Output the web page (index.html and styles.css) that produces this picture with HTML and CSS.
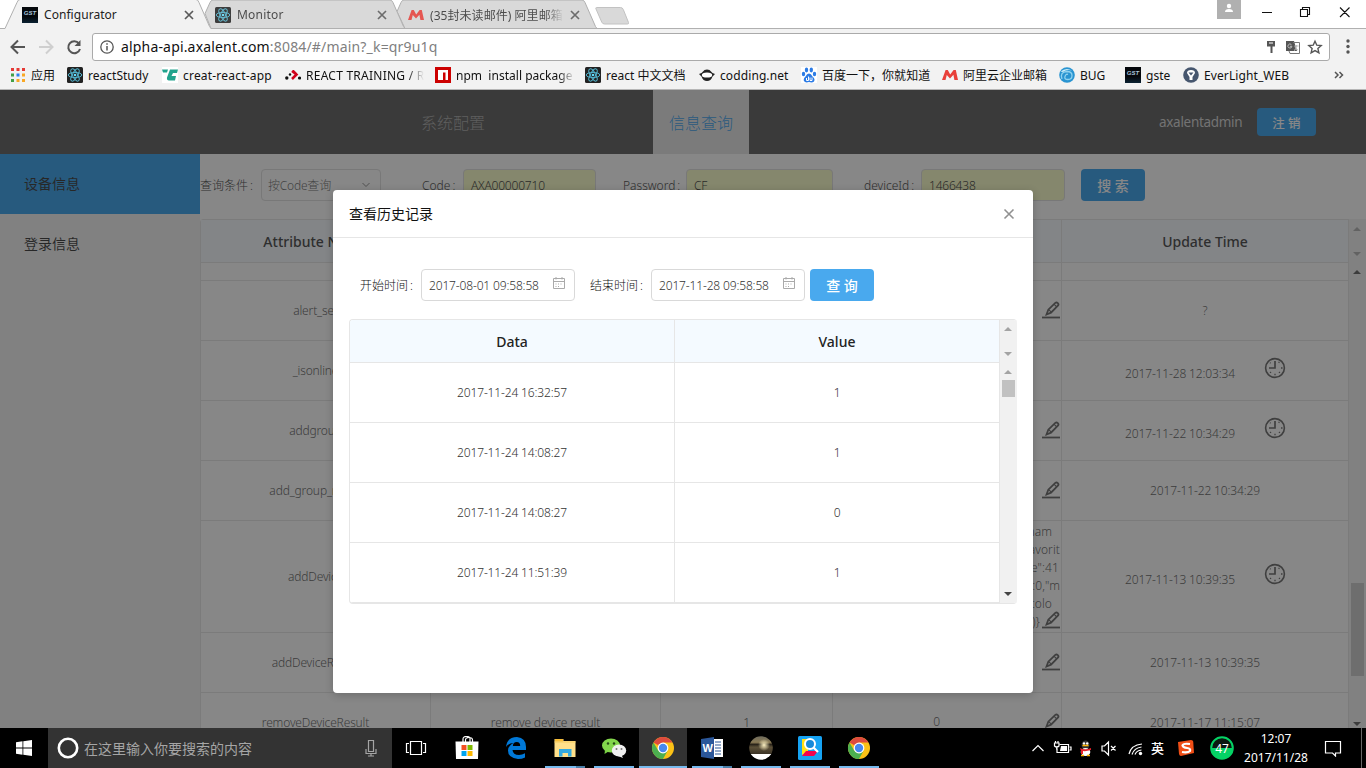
FILE: index.html
```html
<!DOCTYPE html>
<html lang="zh-CN">
<head>
<meta charset="utf-8">
<title>Configurator</title>
<link rel="stylesheet" href="styles.css">
</head>
<body>
<svg class="defs" width="0" height="0">
  <symbol id="react" viewBox="0 0 16 16"><rect width="16" height="16" rx="1.5" fill="#222"/><g fill="none" stroke="#53b5cf" stroke-width="1"><ellipse cx="8" cy="8" rx="6.8" ry="2.6"/><ellipse cx="8" cy="8" rx="6.8" ry="2.6" transform="rotate(60 8 8)"/><ellipse cx="8" cy="8" rx="6.8" ry="2.6" transform="rotate(120 8 8)"/></g><circle cx="8" cy="8" r="1.3" fill="#61dafb"/></symbol>
  <symbol id="mail" viewBox="0 0 16 16"><path d="M0 13L3.6 3h2.200l2.400 4.600L11.600 3h2.200L16 13h-3.600l-1-5.200L8 11.600 4.800 8 3.500 13z" fill="#e8403a"/></symbol>
  <symbol id="x" viewBox="0 0 10 10"><path d="M1 1l8 8M9 1L1 9" stroke="#5a5a5a" stroke-width="1.700"/></symbol>
  <symbol id="pencil" viewBox="0 0 20 20"><g fill="none" stroke="#4d4d4d"><path d="M5.500 13.500L7.300 8.700l7-6.800q1.200-.9 2.500.2 1.200 1.200.3 2.400L10 11.700z" stroke-width="1.800"/><path d="M8 8.800l2 2M13.200 3.300l2.500 2.500" stroke-width="1.200"/><path d="M1 16.500h18" stroke-width="1.800"/></g></symbol>
  <symbol id="clock" viewBox="0 0 22 22"><g fill="none" stroke="#4d4d4d"><circle cx="11" cy="11" r="9.400" stroke-width="1.600"/><path d="M11 4v7H5" stroke-width="1.700"/><path d="M17 11h1.500M11 16.800v1.500M14.600 5.800l.8-.9M15 15l.9.9M7 15l-.9.900M6.600 6.200l-.6-.6" stroke-width="1.300"/></g></symbol>
  <symbol id="calendar" viewBox="0 0 12 12"><g fill="none" stroke="#aaa"><path d="M.5 1.500h11v10H.5zM.5 4.500h11M3 0v2.500M9 0v2.500"/><path d="M2.500 7h7M2.500 9.500h5" stroke-dasharray="1 1.500"/></g></symbol>
  <symbol id="chrome" viewBox="0 0 24 24"><circle cx="12" cy="12" r="11" fill="#fbc116"/><path d="M12 12L2.500 6.500A11 11 0 0 1 21.500 6.500H12z" fill="#dd4b3e"/><path d="M2.470 6.500A11 11 0 0 0 12 23l4.600-8.300L12 12 7.300 14.800z" fill="#4caf50"/><circle cx="12" cy="12" r="5.400" fill="#fff"/><circle cx="12" cy="12" r="4.200" fill="#4788ef"/></symbol>
  <symbol id="up" viewBox="0 0 8 4"><path d="M0 4L4 0l4 4z" fill="currentColor"/></symbol>
  <symbol id="down" viewBox="0 0 8 4"><path d="M0 0l4 4 4-4z" fill="currentColor"/></symbol>
</svg>

<header class="browser">
  <div class="tabs">
    <svg class="tab-shapes" width="640" height="29" viewBox="0 0 640 29">
      <path d="M405 28.500l-8-17 4-9q1-2.500 3-2.500h178q2 0 3 2.500l10.500 24 1.500 2z" fill="#d9d9d9" stroke="#b0b0b0"/>
      <path d="M211 28.500l-6-15 5-11q1-2.500 3-2.500h177q2 0 3 2.500l10.500 24 1.500 2z" fill="#d9d9d9" stroke="#b0b0b0"/>
      <path d="M0 28.500h5L17 2.500Q18-.500 20-.500h176q2 0 3 3l10.500 24 1.500 2V30H0z" fill="#f2f2f2" stroke="#b0b0b0"/>
      <path d="M596.500 7.500h24q2 0 2.800 2l5.200 13q.5 1.500-1 1.500h-23q-2 0-2.800-2l-5.700-13q-.6-1.500.5-1.500z" fill="#d9d9d9" stroke="#c2c2c2"/>
    </svg>
    <div class="tab t1"><span class="gst">GST</span><span>Configurator</span><svg class="tx" width="10" height="10"><use href="#x"/></svg></div>
    <div class="tab t2"><svg width="16" height="16"><use href="#react"/></svg><span class="wide">Monitor</span><svg class="tx" width="10" height="10"><use href="#x"/></svg></div>
    <div class="tab t3"><svg width="16" height="16"><use href="#mail"/></svg><span class="fade">(35封未读邮件) 阿里邮箱</span><svg class="tx" width="10" height="10"><use href="#x"/></svg></div>
    <svg class="window-controls" width="150" height="28" viewBox="0 0 150 28"><rect x="1" width="24" height="19" fill="#b0b0b0"/><circle cx="13" cy="6" r="2.200" fill="#fff"/><path d="M9 12q0-3 4-3t4 3z" fill="#fff"/><path d="M46 12.500h10M84.500 9.500h7v7h-7zM86.500 9V7.500h7v7H92M124 7.500l9.500 9.500M133.500 7.500L124 17" fill="none" stroke="#111" stroke-width="1.100"/></svg>
  </div>
  <div class="toolbar">
    <svg class="nav-icons" width="92" height="32" viewBox="0 0 92 32"><g fill="none" stroke-width="2"><path d="M25 18H12M18 11.500L11.500 18l6.500 6.500" stroke="#555"/><path d="M39 18h13M46 11.500l6.500 6.500-6.500 6.500" stroke="#cfcfcf"/><path d="M79 14.500A6 6 0 1 0 80 20" stroke="#555"/><path d="M80.500 11v6h-6z" fill="#555"/></g></svg>
    <div class="address">
      <svg width="14" height="14" viewBox="0 0 14 14"><circle cx="7" cy="7" r="6.200" fill="none" stroke="#555" stroke-width="1.300"/><path d="M7 6v4.500M7 3.300v1.500" stroke="#555" stroke-width="1.500"/></svg>
      <span class="url">alpha-api.axalent.com<i>:8084/#/main?_k=qr9u1q</i></span>
      <svg class="address-icons" width="58" height="18" viewBox="0 0 58 18"><path d="M2 3h8v5.500H7.500V15h-2V8.500H2z" fill="#555"/><path d="M4 5h4" stroke="#fff"/><path d="M21 3h8l3 10h-11z" fill="#555"/><path d="M28 4.500h6.500v11H25l-1-2.500" fill="none" stroke="#777"/><path d="M26.500 6.800a2 2 0 1 0 .4 1.500h-2M29.500 8h4M31.500 7c0 3-1 5-2.500 5.500M30 8.500c.5 2 2 3 3 3.500" fill="none" stroke="#bbb"/><path d="M50 3.200l1.800 4 4.400.4-3.300 3 1 4.300-3.900-2.300-3.900 2.300 1-4.300-3.300-3 4.400-.4z" fill="none" stroke="#555" stroke-width="1.400"/></svg>
    </div>
    <svg class="more" width="6" height="16" viewBox="0 0 6 16"><circle cx="3" cy="3" r="1.700" fill="#555"/><circle cx="3" cy="8.500" r="1.700" fill="#555"/><circle cx="3" cy="14" r="1.700" fill="#555"/></svg>
  </div>
  <nav class="bookmarks">
    <a class="w57"><svg width="16" height="16" viewBox="0 0 16 16"><path d="M1 2.500h14" stroke="#e53935" stroke-width="3" stroke-dasharray="3 2.500"/><path d="M1 8h3" stroke="#43a047" stroke-width="3"/><path d="M6.500 8h3" stroke="#2f80ed" stroke-width="3"/><path d="M12 8h3" stroke="#f9a825" stroke-width="3"/><path d="M1 13.500h3" stroke="#43a047" stroke-width="3"/><path d="M6.500 13.500h8.500" stroke="#f9a825" stroke-width="3" stroke-dasharray="3 2.500"/></svg><span>应用</span></a>
    <a class="w95"><svg width="16" height="16"><use href="#react"/></svg><span>reactStudy</span></a>
    <a class="w123"><svg width="16" height="16" viewBox="0 0 16 16"><rect width="16" height="16" fill="#fff"/><path d="M0 2.500h6l-1 3H1zM8 2.500h8l-1 3.500h-4L9.500 9H14l-1 4.500H7q-2.500 0-2-3z" fill="#22a38d"/></svg><span class="loose">creat-react-app</span></a>
    <a class="w150"><svg width="16" height="16" viewBox="0 0 16 16"><g fill="#111"><circle cx="1.800" cy="11" r="1.700"/><circle cx="5" cy="7.500" r="1.200"/><circle cx="14.500" cy="11" r="1.600"/></g><path d="M7 4l4.500 3.500L7 12M11.500 7.500L8 4" fill="none" stroke="#d0021b" stroke-width="2.500"/></svg><span class="fade train">REACT TRAINING / R</span></a>
    <a class="w150"><svg width="16" height="16" viewBox="0 0 16 16"><rect width="16" height="16" fill="#c00"/><path d="M3 3h10v10h-2.500V5.500H8V13H3z" fill="#fff"/></svg><span class="fade npm">npm&nbsp; install package</span></a>
    <a class="w114"><svg width="16" height="16"><use href="#react"/></svg><span>react 中文文档</span></a>
    <a class="w102"><svg width="16" height="16" viewBox="0 0 16 16"><path d="M4 4.500q1-2 4-2t4 2l1.500 1.500L16 7l-2.500 2.500Q12 14 8 14t-5.500-4.500L0 7l2.500-1z" fill="#222"/><ellipse cx="8" cy="8" rx="5.200" ry="2.600" fill="#fff"/></svg><span class="loose">codding.net</span></a>
    <a class="w141"><svg width="16" height="16" viewBox="0 0 16 16"><rect width="16" height="16" fill="#fff"/><g fill="#2c7be5"><ellipse cx="5.500" cy="3" rx="1.700" ry="2.400"/><ellipse cx="10.300" cy="3" rx="1.700" ry="2.400"/><ellipse cx="2.500" cy="7" rx="1.700" ry="2.300"/><ellipse cx="13.500" cy="7" rx="1.700" ry="2.300"/><path d="M8 6.500q2 0 3.500 3 3 2 1.500 5-1.500 1.500-5 .6-4 1-5-1-1-2.600 1.500-4.600Q6 6.500 8 6.500"/></g><path d="M5.500 11v2.500h2v-4M9 10.500v3h2v-3" fill="none" stroke="#fff"/></svg><span>百度一下，你就知道</span></a>
    <a class="w117"><svg width="16" height="16"><use href="#mail"/></svg><span>阿里云企业邮箱</span></a>
    <a class="w66"><svg width="16" height="16" viewBox="0 0 16 16"><circle cx="8" cy="8" r="7.800" fill="#2994d1"/><path d="M1.500 4.500Q7 0 13 3.500 8 2 4 5z" fill="#c9ecf9"/><path d="M3 12Q.5 5 8 4.500q5 0 5 4T9 12.500 6 9.500t3-2" fill="none" stroke="#8fd2ef" stroke-width="1.300"/></svg><span>BUG</span></a>
    <a class="w58"><span class="gst">GST</span><span>gste</span></a>
    <a class="w151"><svg width="16" height="16" viewBox="0 0 16 16"><circle cx="8" cy="8" r="7.800" fill="#46566e"/><path d="M4 6q0-3 4-3t4 3L9.500 10v3h-3v-3z" fill="#fff"/><path d="M5.500 5.500h5L8 8.500z" fill="#46566e"/></svg><span class="loose">EverLight_WEB</span></a>
    <svg width="10" height="8" viewBox="0 0 10 8"><path d="M1 1l3 3-3 3M5.500 1l3 3-3 3" fill="none" stroke="#555" stroke-width="1.500"/></svg>
  </nav>
</header>

<main class="app">
  <div class="topbar">
    <a class="top-link">系统配置</a><a class="top-link active">信息查询</a>
    <span class="user">axalentadmin</span><button class="btn small">注 销</button>
  </div>
  <div class="body">
    <aside class="side"><a class="active">设备信息</a><a>登录信息</a></aside>
    <section class="content">
      <div class="filters">
        <label class="f1">查询条件<s>:</s></label><div class="select">按Code查询<svg width="8" height="6" viewBox="0 0 8 6"><path d="M.5 1L4 4.500 7.500 1" fill="none" stroke="#777"/></svg></div>
        <label class="f2">Code<s>:</s></label><div class="input i2">AXA00000710</div>
        <label class="f3">Password<s>:</s></label><div class="input i3">CF</div>
        <label class="f4">deviceId<s>:</s></label><div class="input i4">1466438</div>
        <button class="btn">搜 索</button>
      </div>
      <div class="grid-wrap">
        <div class="grid">
          <div class="row head"><div>Attribute Name</div><div></div><div></div><div></div><div>Update Time</div></div>
          <div class="row stub"><div></div><div></div><div></div><div></div><div></div></div>
          <div class="row"><div>alert_set</div><div></div><div></div><div class="edit"><svg><use href="#pencil"/></svg></div><div>?</div></div>
          <div class="row"><div>_isonline</div><div></div><div></div><div></div><div class="hist"><span>2017-11-28 12:03:34</span><svg><use href="#clock"/></svg></div></div>
          <div class="row"><div>addgroup</div><div></div><div></div><div class="edit"><svg><use href="#pencil"/></svg></div><div class="hist"><span>2017-11-22 10:34:29</span><svg><use href="#clock"/></svg></div></div>
          <div class="row"><div>add_group_result</div><div></div><div></div><div class="edit"><svg><use href="#pencil"/></svg></div><div>2017-11-22 10:34:29</div></div>
          <div class="row tall"><div>addDevice</div><div></div><div></div><div class="edit json"><p><span class="p8">nam</span><span>avorit</span><span class="p3">e":41</span><span>:0,"m</span><span class="p8">tolo</span><span class="p20">)}</span></p><svg><use href="#pencil"/></svg></div><div class="hist"><span>2017-11-13 10:39:35</span><svg><use href="#clock"/></svg></div></div>
          <div class="row"><div>addDeviceResult</div><div></div><div></div><div class="edit"><svg><use href="#pencil"/></svg></div><div>2017-11-13 10:39:35</div></div>
          <div class="row"><div>removeDeviceResult</div><div>remove device result</div><div>1</div><div class="edit"><b>0</b><svg><use href="#pencil"/></svg></div><div>2017-11-17 11:15:07</div></div>
        </div>
        <div class="scroll page-scroll">
          <svg class="a1"><use href="#up"/></svg><svg class="a2"><use href="#down"/></svg><svg class="a3 dark"><use href="#up"/></svg><i></i><svg class="a4 dark"><use href="#down"/></svg>
        </div>
      </div>
    </section>
  </div>
  <div class="mask">
    <div class="modal">
      <div class="modal-head"><span>查看历史记录</span><svg width="12" height="12" viewBox="0 0 12 12"><path d="M1.500 1.500l9 9M10.500 1.500l-9 9" stroke="#919191" stroke-width="1.600"/></svg></div>
      <div class="modal-form">
        <label>开始时间<s>:</s></label><div class="date">2017-08-01 09:58:58<svg width="12" height="12"><use href="#calendar"/></svg></div>
        <label class="end">结束时间<s>:</s></label><div class="date">2017-11-28 09:58:58<svg width="12" height="12"><use href="#calendar"/></svg></div>
        <button class="btn bright">查 询</button>
      </div>
      <div class="history">
        <div class="history-grid">
          <div class="h">Data</div><div class="h">Value</div>
          <div>2017-11-24 16:32:57</div><div>1</div>
          <div>2017-11-24 14:08:27</div><div>1</div>
          <div>2017-11-24 14:08:27</div><div>0</div>
          <div>2017-11-24 11:51:39</div><div>1</div>
        </div>
        <div class="scroll modal-scroll">
          <svg class="a1"><use href="#up"/></svg><svg class="a2"><use href="#down"/></svg><svg class="a3"><use href="#up"/></svg><i></i><svg class="a4 dark"><use href="#down"/></svg>
        </div>
      </div>
    </div>
  </div>
</main>

<footer class="taskbar">
  <div class="start"><svg width="16" height="16" viewBox="0 0 16 16"><path d="M0 2.200L6.500 1.300v6.200H0zM7.300 1.200L16 0v7.500H7.300zM0 8.400h6.500v6.300L0 13.800zM7.300 8.400H16V16l-8.700-1.200z" fill="#fff"/></svg></div>
  <div class="search"><svg width="22" height="22" viewBox="0 0 22 22"><circle cx="11" cy="11" r="9.200" fill="none" stroke="#fff" stroke-width="2.600"/></svg><span>在这里输入你要搜索的内容</span><svg width="12" height="17" viewBox="0 0 12 17"><path d="M3.500.5h5v11h-5zM1 9v4.500h10V9M6 13.500V16M3 16h6" fill="none" stroke="#a5a5a5" stroke-width="1.200"/></svg></div>
  <div class="task view"><svg width="22" height="16" viewBox="0 0 22 16"><path d="M5.500 1.500h11v13h-11zM4 3.500H1.500v9H4M18 3.500h2.500v9H18" fill="none" stroke="#fff" stroke-width="1.200"/></svg></div>
  <div class="task"><svg width="24" height="24" viewBox="0 0 24 24"><path d="M8 7V3q0-2.500 3.500-2.500T15 3v4M10.500 7V4q0-2.500 3.500-2.500T17.500 4v3" fill="none" stroke="#fff" stroke-width="1.200"/><path d="M.5 5.500h23L23 23H1z" fill="#fff"/><path fill="#f25022" d="M6.500 9h5v5h-5z"/><path fill="#7fba00" d="M12.500 9h5v5h-5z"/><path fill="#00a4ef" d="M6.500 15h5v5h-5z"/><path fill="#ffb900" d="M12.500 15h5v5h-5z"/></svg></div>
  <div class="task"><svg width="24" height="24" viewBox="0 0 24 24"><path d="M2 11Q3 1 13 1q9 1 9 10v3H8.500q.5 5 6.500 5 3 0 6-1.800v4.300Q18 23 14 23 4 22 4 14.500 4 10 9.500 7 4 7.500 2 11M8.800 10h7.400q0-4-3.500-4T8.800 10" fill="#0078d7" fill-rule="evenodd"/></svg></div>
  <div class="task open multi"><svg width="24" height="24" viewBox="0 0 24 24"><path d="M1.500 3h9v2h12v16h-21z" fill="#ffe08a"/><path d="M2 3h8v2.500H2z" fill="#f7bd38"/><path d="M1.500 6h21" stroke="#f4cb5f"/><path d="M6 13h12.500v7.500h-3.500V17H9.500v3.500H6z" fill="#33a9df"/></svg></div>
  <div class="task open"><svg width="26" height="24" viewBox="0 0 26 24"><path d="M4 14l-.5 4 4-2.500z" fill="#75cf42"/><ellipse cx="10" cy="9.500" rx="9" ry="7" fill="#83d64c"/><circle cx="7" cy="7.500" r="1.200" fill="#264a17"/><circle cx="13" cy="7.500" r="1.200" fill="#264a17"/><path d="M20 18l2 4-5-2z" fill="#eee"/><ellipse cx="18" cy="14.500" rx="7.200" ry="6" fill="#f0f0f0"/><circle cx="15.500" cy="13" r="1" fill="#777"/><circle cx="20.500" cy="13" r="1" fill="#777"/></svg></div>
  <div class="task open current"><svg width="24" height="24"><use href="#chrome"/></svg></div>
  <div class="task open multi"><svg width="24" height="24" viewBox="0 0 24 24"><path d="M13 3h10v18H13z" fill="#fff"/><path d="M15 6h6M15 9h6M15 12h6M15 15h6M15 18h6" stroke="#2b5797"/><path d="M1 3l13-2v22L1 21z" fill="#2b579a"/><text x="2.500" y="16" font-family="Liberation Sans" font-size="11" font-weight="bold" fill="#fff">W</text></svg></div>
  <div class="task open"><svg width="24" height="24" viewBox="0 0 24 24"><defs><clipPath id="round"><circle cx="12" cy="12" r="11.800"/></clipPath><linearGradient id="scene" x2="0" y2="1"><stop stop-color="#6d6a5c"/><stop offset=".35" stop-color="#8a7a55"/><stop offset=".47" stop-color="#2a241a"/><stop offset=".62" stop-color="#5c5038"/><stop offset="1" stop-color="#3a3225"/></linearGradient><radialGradient id="sun"><stop stop-color="#fff3c4"/><stop offset="1" stop-color="#fff3c4" stop-opacity="0"/></radialGradient></defs><g clip-path="url(#round)"><path fill="url(#scene)" d="M0 0h24v18H0z"/><circle cx="15" cy="9" r="6" fill="url(#sun)"/><path d="M0 18h24v6H0z" fill="#fff"/></g></svg></div>
  <div class="task open"><svg width="24" height="24" viewBox="0 0 24 24"><rect width="24" height="24" rx="1.500" fill="#16a3f3"/><path d="M4 3h6v12l-6 4z" fill="#ffe014"/><path d="M4 20l4-5h12l-4 5z" fill="#f3044f"/><circle cx="12" cy="8" r="5" fill="#1689d9" stroke="#fff" stroke-width="2"/><path d="M15.500 11.500L20 16" stroke="#fff" stroke-width="2.200"/></svg></div>
  <div class="task open"><svg width="24" height="24"><use href="#chrome"/></svg></div>
  <div class="tray">
    <svg class="tray-icons" width="120" height="24" viewBox="0 0 120 24"><g fill="none" stroke="#fff" stroke-width="1.200"><path d="M2.500 15l5.500-5.500 5.500 5.500"/><path d="M29.500 8.500h9v8H27v-4M39.500 11h1.500v3h-1.500"/><path d="M31 10h6v5h-7z" fill="#fff" stroke="none"/><path d="M24.500 7h4.500v3q-2.250 2-4.500 0zM25.500 7V5M28 7V5M26.750 11v2.500"/><path d="M72 10h2.500l4-4v13l-4-4H72zM81 10l4.500 4.500M85.500 10L81 14.500"/><path d="M99 18Q101 9 112 8M102 18.500q2-6.500 9.500-7.500M105 18.500q1.500-4 6.500-4.500"/></g><circle cx="110.500" cy="17.500" r="1.700" fill="#fff"/><ellipse cx="55.500" cy="9" rx="4" ry="4.500" fill="#333"/><ellipse cx="55.500" cy="16" rx="4.800" ry="4" fill="#fff"/><circle cx="54" cy="7.500" r="1.200" fill="#fff"/><circle cx="57.200" cy="7.500" r="1.200" fill="#fff"/><path d="M52.500 9.500h6M51 19.500h3M57 19.500h3" stroke="#ffb300" stroke-width="1.500"/><path d="M50 12q5 2.500 11 0v2q-5 1.500-8 1v3h-2v-3z" fill="#e62129"/></svg>
    <span class="ime">英</span>
    <svg class="sogou" width="18" height="18" viewBox="0 0 18 18"><path d="M1 3L14 1q2 0 2.200 1.500L17 14l-13 3q-1.500 0-2-2z" fill="#f04e16"/><path d="M13 5Q6 4 5.500 6.500 6 8.500 10 9t3 3q-2 2-8 1" fill="none" stroke="#fff" stroke-width="2.200"/></svg>
    <svg class="battery" width="24" height="24" viewBox="0 0 24 24"><circle cx="12" cy="12" r="10.800" fill="#0b1810" stroke="#05d365" stroke-width="2"/><path d="M1 12h22A11 11 0 0 1 1 12" fill="#05d365"/><text x="12" y="16.500" text-anchor="middle" font-family="Noto Sans" font-size="12" fill="#fff">47</text></svg>
    <div class="time"><span>12:07</span><span>2017/11/28</span></div>
    <svg class="note" width="18" height="17" viewBox="0 0 18 17"><path d="M1.500 1.500h15v11.500h-5v3l-3-3h-7z" fill="none" stroke="#fff" stroke-width="1.200"/></svg>
  </div>
</footer>
</body>
</html>
```
FILE: styles.css
```css
* { box-sizing: border-box; }
body { margin: 0; width: 1366px; height: 768px; overflow: hidden; font: 12px "Noto Sans", "Noto Sans CJK SC", sans-serif; color: #666; display: flex; flex-direction: column; }
svg { display: block; flex: none; }
.defs { position: absolute; }
span, a, label { white-space: nowrap; }

.browser { height: 90px; flex: none; background: #f2f2f2; border-bottom: 1px solid #b6b6b6; color: #111; }
.tabs { height: 29px; position: relative; background: #fff; border-bottom: 1px solid #b0b0b0; display: flex; }
.tab-shapes { position: absolute; left: 0; top: 0; }
.tab { position: relative; display: flex; align-items: center; height: 29px; width: 193px; padding-left: 22px; gap: 6px; color: #333; letter-spacing: .05px; }
.t1 { color: #222; }
.wide { letter-spacing: .2px; }
.tab .tx { margin-left: auto; margin-right: -1px; }
.t2, .t3 { opacity: .85; }
.t3 .fade { width: 134px; }
.gst { width: 16px; height: 16px; flex: none; background: linear-gradient(#05080c 60%, #0b2233); color: #a9c6dc; font: italic bold 6px/12px "Liberation Sans", sans-serif; letter-spacing: 0; text-align: center; }
.fade { -webkit-mask-image: linear-gradient(90deg, #000 86%, transparent); mask-image: linear-gradient(90deg, #000 86%, transparent); }
.window-controls { margin-left: auto; }
.toolbar { height: 32px; display: flex; align-items: center; }
.nav-icons { margin-top: -1px; }
.address { height: 28px; width: 1238px; margin-top: 4px; border: 1px solid #aaa; border-radius: 3px; background: #fff; display: flex; align-items: center; padding-left: 7px; gap: 7px; }
.url { font-size: 14px; letter-spacing: .17px; margin-top: -1px; color: #111; }
.url i { font-style: normal; color: #808080; }
.address-icons { margin-left: auto; margin-right: 6px; }
.more { margin: 2px 0 0 15px; }
.bookmarks { height: 28px; display: flex; align-items: center; padding-left: 10px; }
.bookmarks a { display: flex; align-items: center; gap: 5px; flex: none; letter-spacing: .02px; }
.bookmarks .gst { letter-spacing: 0; }
.bookmarks .loose { letter-spacing: .2px; }
.w102 .loose, .w151 .loose { letter-spacing: .1px; }
.w57 { width: 57px; } .w95 { width: 95px; } .w123 { width: 123px; } .w150 { width: 150px; } .w114 { width: 114px; } .w102 { width: 102px; } .w141 { width: 141px; } .w117 { width: 117px; } .w66 { width: 66px; } .w58 { width: 58px; } .w151 { width: 151px; }
.train { width: 118px; letter-spacing: .25px; } .npm { width: 119px; }

.app { height: 638px; flex: none; position: relative; background: #fff; overflow: hidden; font-weight: 300; }
.topbar { height: 64px; background: #404040; display: flex; align-items: center; padding-left: 405px; color: #ccc; }
.top-link { height: 64px; width: 96px; display: flex; align-items: center; justify-content: center; padding-bottom: 1px; font-size: 16px; color: #999; }
.top-link.active { margin-left: 152px; background: #e2e2e2; color: #108ee9; }
.user { margin-left: 410px; width: 98px; font-size: 13.500px; font-weight: 400; letter-spacing: -.3px; }
.btn { font: 500 14px "Noto Sans", "Noto Sans CJK SC", sans-serif; color: #fff; background: #108ee9; border: 0; border-radius: 4px; width: 64px; height: 32px; padding: 0 0 1px; }
.btn.small { width: 59px; height: 28px; font-size: 12.500px; padding: 0; }
.btn.bright { background: #49a9ee; margin-left: 5px; }
.body { display: flex; height: 574px; }
.side { width: 200px; background: #f1f1f1; }
.side a { height: 60px; display: flex; align-items: center; padding: 0 0 2px 24px; font-size: 14px; font-weight: 400; color: #111; }
.side .active { background: #108ee9; }
.content { width: 1166px; }
.filters { height: 65px; display: flex; align-items: center; padding-bottom: 3px; color: #222; }
s { text-decoration: none; margin-left: 2px; }
.f1 { width: 61px; } .f2 { width: 41px; margin-left: 41px; } .f3 { width: 63px; margin-left: 27px; } .f4 { width: 57px; margin-left: 31px; }
.select, .input { height: 32px; border: 1px solid #d9d9d9; border-radius: 4px; display: flex; align-items: center; padding: 0 7px; letter-spacing: -.2px; }
.select { width: 120px; justify-content: space-between; padding: 0 10px 0 6px; color: #555; }
.input { background: #faffbd; color: #111; }
.i2 { width: 133px; } .i3 { width: 147px; } .i4 { width: 144px; }
.filters .btn { margin-left: 16px; }
.grid-wrap { display: flex; height: 509px; }
.grid { width: 1149px; flex: none; border: solid #e0e0e0; border-width: 1px 1px 0; border-radius: 4px 0 0; color: #444; }
.row { display: grid; grid-template-columns: 230px 230px 172px 229px 286px; height: 60px; border-bottom: 1px solid #e0e0e0; }
.row > div { display: flex; align-items: center; justify-content: center; letter-spacing: -.15px; border-right: 1px solid #e0e0e0; }
.row > div:last-child { border-right: 0; }
.row.head { height: 43px; background: #f4faff; }
.row.head > div { font-size: 14px; font-weight: 500; color: #222; letter-spacing: 0; }
.row.stub { height: 18px; }
.row.tall { height: 112px; }
.row .edit { justify-content: flex-end; }
.edit svg { width: 20px; height: 20px; }
.edit b { font-weight: inherit; margin: 0 101px 2px 0; }
.row .json { align-items: flex-end; padding-bottom: 1px; }
.json p { margin: 0 -20px 0 0; flex: 1; display: flex; flex-direction: column; text-align: right; line-height: 18px; padding-right: 1px; letter-spacing: .1px; }
.json .p8 { padding-right: 8px; } .json .p3 { padding-right: 1px; } .json .p20 { padding-right: 20px; }
.hist span { margin: 5px 29px 0 1px; }
.hist svg { width: 22px; height: 22px; margin-top: -5px; }
.scroll { background: #f1f1f1; position: relative; color: #a3a3a3; display: flex; flex-direction: column; align-items: center; padding-right: 1px; }
.scroll svg { width: 8px; height: 4px; }
.scroll .dark { color: #444; }
.scroll i { width: 13px; background: #c1c1c1; margin-right: -1px; }
.page-scroll { width: 17px; padding-top: 8px; }
.page-scroll .a2 { margin-top: 21px; } .page-scroll .a3 { margin-top: 14px; } .page-scroll i { height: 93px; margin-top: 309px; } .page-scroll .a4 { margin-top: 46px; }

.mask { position: absolute; inset: 0; background: rgba(55, 55, 55, .6); padding: 100px 0 0 333px; }
.modal { width: 700px; height: 503px; background: #fff; border-radius: 4px; box-shadow: 0 2px 8px rgba(0, 0, 0, .2); }
.modal-head { height: 48px; border-bottom: 1px solid #e6e6e6; display: flex; align-items: center; justify-content: space-between; padding: 0 18px 0 16px; font-size: 14px; color: #111; }
.modal-head span { font-weight: 400; margin-top: -2px; }
.modal-form { height: 81px; display: flex; align-items: center; padding: 13px 0 0 27px; color: #111; }
.modal-form label { width: 61px; }
.modal-form .end { margin-left: 15px; }
.date { width: 154px; height: 32px; border: 1px solid #d9d9d9; border-radius: 4px; display: flex; align-items: center; justify-content: space-between; padding: 0 9px 0 7px; letter-spacing: -.15px; color: #333; }
.date svg { margin-top: -4px; }
.history { width: 668px; height: 285px; margin-left: 16px; border: 1px solid #e6e6e6; border-right: 0; border-radius: 4px; overflow: hidden; display: flex; }
.history-grid { width: 650px; display: grid; grid-template-columns: 325px 325px; grid-template-rows: 43px repeat(4, 60px); color: #333; }
.history-grid div { display: flex; align-items: center; justify-content: center; border: solid #e6e6e6; border-width: 0 1px 1px 0; letter-spacing: -.15px; }
.history-grid .h { background: #f4faff; font-size: 14px; font-weight: 500; color: #222; letter-spacing: 0; }
.modal-scroll { width: 17px; padding-top: 7px; }
.modal-scroll .a2 { margin-top: 21px; } .modal-scroll .a3 { margin-top: 14px; } .modal-scroll i { height: 17px; margin-top: 6px; } .modal-scroll .a4 { margin-top: 195px; }

.taskbar { height: 40px; flex: none; background: #000; display: flex; color: #fff; }
.start { width: 48px; display: flex; align-items: center; justify-content: center; }
.search { width: 344px; background: #333; display: flex; align-items: center; padding: 0 15px 0 9px; gap: 5px; font-size: 14px; color: #a5a5a5; }
.search svg:last-child { margin-left: auto; }
.task { width: 48px; margin-left: 1px; display: flex; align-items: center; justify-content: center; position: relative; }
.task.view { margin-left: 0; margin-right: 2px; }
.task.current { background: #333; }
.task.open::after { content: ""; position: absolute; left: 4px; right: 4px; bottom: 0; height: 2px; background: #76b9ed; }
.task.current::after { left: 0; right: 0; }
.task.multi::after { background: linear-gradient(90deg, #76b9ed 31px, #4a7fa8 31px); }
.tray { display: flex; align-items: center; margin-left: auto; width: 336px; height: 40px; padding-right: 4px; }
.tray-icons { margin-right: 1px; }
.ime { font-size: 13px; width: 20px; font-weight: 500; margin-top: -2px; }
.sogou { margin-left: 6px; }
.battery { margin-left: 15px; }
.time { width: 70px; margin-left: 7px; display: flex; flex-direction: column; align-items: center; line-height: 19px; letter-spacing: 0; }
.note { margin-left: 13px; }
.tray::after { content: ""; width: 1px; height: 40px; background: #666; margin-left: auto; }
```
